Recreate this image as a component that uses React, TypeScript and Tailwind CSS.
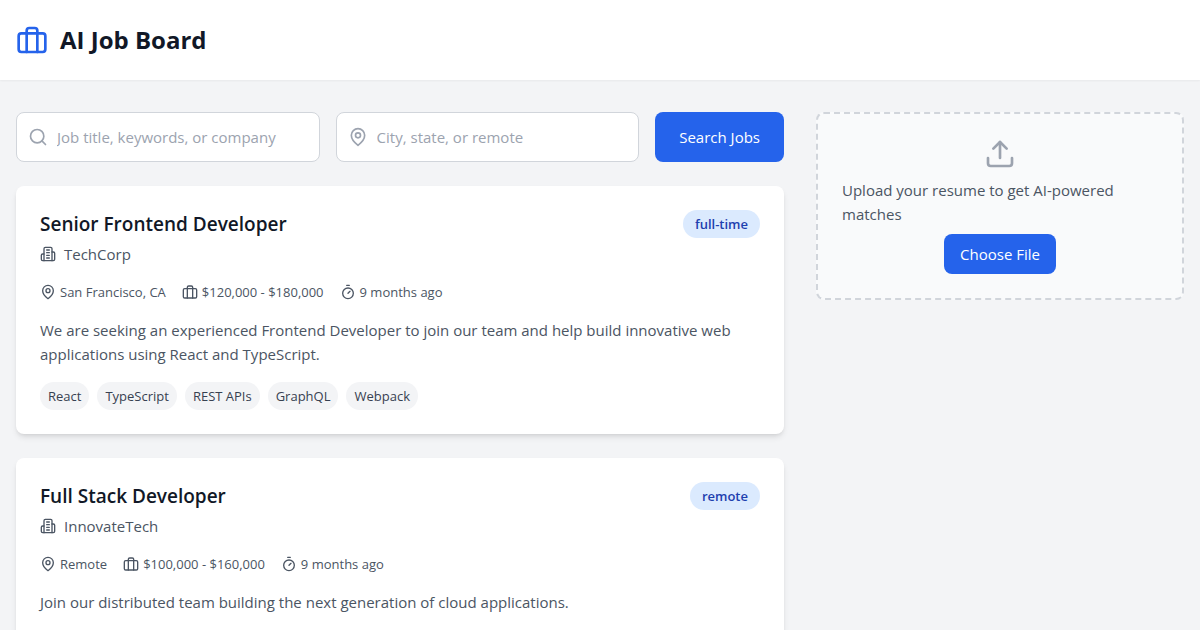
import type { FormEvent, ReactNode } from "react";
import { useRef, useState } from "react";

type IconProps = { className?: string };

function Icon({ className, children }: IconProps & { children: ReactNode }) {
  return (
    <svg
      viewBox="0 0 24 24"
      fill="none"
      stroke="currentColor"
      strokeWidth="2"
      strokeLinecap="round"
      strokeLinejoin="round"
      aria-hidden="true"
      className={className}
    >
      {children}
    </svg>
  );
}

const Briefcase = ({ className }: IconProps) => (
  <Icon className={className}>
    <rect width="20" height="14" x="2" y="7" rx="2" ry="2" />
    <path d="M16 21V5a2 2 0 0 0-2-2h-4a2 2 0 0 0-2 2v16" />
  </Icon>
);

const MapPin = ({ className }: IconProps) => (
  <Icon className={className}>
    <path d="M20 10c0 6-8 12-8 12s-8-6-8-12a8 8 0 0 1 16 0Z" />
    <circle cx="12" cy="10" r="3" />
  </Icon>
);

const Search = ({ className }: IconProps) => (
  <Icon className={className}>
    <circle cx="11" cy="11" r="8" />
    <path d="m21 21-4.3-4.3" />
  </Icon>
);

const Building = ({ className }: IconProps) => (
  <Icon className={className}>
    <path d="M6 22V4a2 2 0 0 1 2-2h8a2 2 0 0 1 2 2v18Z" />
    <path d="M6 12H4a2 2 0 0 0-2 2v6a2 2 0 0 0 2 2h2" />
    <path d="M18 9h2a2 2 0 0 1 2 2v9a2 2 0 0 1-2 2h-2" />
    <path d="M10 6h4" />
    <path d="M10 10h4" />
    <path d="M10 14h4" />
    <path d="M10 18h4" />
  </Icon>
);

const Timer = ({ className }: IconProps) => (
  <Icon className={className}>
    <line x1="10" x2="14" y1="2" y2="2" />
    <line x1="12" x2="15" y1="14" y2="11" />
    <circle cx="12" cy="14" r="8" />
  </Icon>
);

const Upload = ({ className }: IconProps) => (
  <Icon className={className}>
    <path d="M21 15v4a2 2 0 0 1-2 2H5a2 2 0 0 1-2-2v-4" />
    <polyline points="17 8 12 3 7 8" />
    <line x1="12" x2="12" y1="3" y2="15" />
  </Icon>
);

type Job = {
  title: string;
  company: string;
  type: string;
  location: string;
  salary: string;
  posted: string;
  description: string;
  skills: string[];
};

const jobs: Job[] = [
  {
    title: "Senior Frontend Developer",
    company: "TechCorp",
    type: "full-time",
    location: "San Francisco, CA",
    salary: "$120,000 - $180,000",
    posted: "9 months ago",
    description:
      "We are seeking an experienced Frontend Developer to join our team and help build innovative web applications using React and TypeScript.",
    skills: ["React", "TypeScript", "REST APIs", "GraphQL", "Webpack"],
  },
  {
    title: "Full Stack Developer",
    company: "InnovateTech",
    type: "remote",
    location: "Remote",
    salary: "$100,000 - $160,000",
    posted: "9 months ago",
    description: "Join our distributed team building the next generation of cloud applications.",
    skills: ["React", "Node.js", "AWS", "MongoDB", "Docker"],
  },
];

function JobCard({ job }: { job: Job }) {
  return (
    <article className="rounded-lg bg-white p-6 shadow-md">
      <div className="flex items-start justify-between">
        <div>
          <h2 className="text-[19px] leading-7 font-semibold text-[#111827]">{job.title}</h2>
          <div className="mt-1 flex items-center gap-2 text-[#4b5563]">
            <Building className="size-4" />
            <span>{job.company}</span>
          </div>
        </div>
        <span className="rounded-full bg-[#dbeafe] px-3 py-1 text-[13px] leading-5 font-semibold text-[#1e40af]">
          {job.type}
        </span>
      </div>
      <div className="mt-4 flex flex-wrap gap-4 text-[13px] leading-5 text-[#4b5563]">
        <div className="flex items-center gap-1">
          <MapPin className="size-4" />
          <span>{job.location}</span>
        </div>
        <div className="flex items-center gap-1">
          <Briefcase className="size-4" />
          <span>{job.salary}</span>
        </div>
        <div className="flex items-center gap-1">
          <Timer className="size-4" />
          <span>{job.posted}</span>
        </div>
      </div>
      <p className="mt-4 text-[#4b5563]">{job.description}</p>
      <ul className="mt-4 flex flex-wrap gap-2">
        {job.skills.map((skill) => (
          <li key={skill} className="rounded-full bg-[#f3f4f6] px-2 py-1 text-[13px] leading-5 text-[#374151]">
            {skill}
          </li>
        ))}
      </ul>
    </article>
  );
}

function SearchField({
  label,
  icon,
  value,
  onChange,
}: {
  label: string;
  icon: ReactNode;
  value: string;
  onChange: (value: string) => void;
}) {
  return (
    <label className="relative min-w-0 flex-1">
      <span className="pointer-events-none absolute inset-y-0 left-3 flex items-center text-[#9ca3af]">{icon}</span>
      <input
        type="text"
        aria-label={label}
        placeholder={label}
        value={value}
        onChange={(event) => onChange(event.target.value)}
        className="w-full rounded-lg border border-[#d1d5db] bg-white py-3 pr-4 pl-10 text-[#111827] placeholder:text-[#9ca3af] focus:border-[#2563eb] focus:outline-none"
      />
    </label>
  );
}

export default function App() {
  const [keywords, setKeywords] = useState("");
  const [place, setPlace] = useState("");
  const fileInput = useRef<HTMLInputElement>(null);

  return (
    <div className="min-h-screen bg-[#f3f4f6] font-['Segoe_UI','Open_Sans',sans-serif] text-[15px] leading-6">
      <header className="bg-white shadow-xs">
        <div className="mx-auto flex max-w-7xl items-center gap-3 px-4 py-6">
          <Briefcase className="size-8 text-[#2563eb]" />
          <h1 className="text-2xl font-bold text-[#111827]">AI Job Board</h1>
        </div>
      </header>
      <main className="mx-auto grid max-w-7xl grid-cols-3 gap-8 px-4 py-8">
        <div className="col-span-2 flex flex-col gap-6">
          <form className="flex gap-4" onSubmit={(event: FormEvent) => event.preventDefault()}>
            <SearchField
              label="Job title, keywords, or company"
              icon={<Search className="size-5" />}
              value={keywords}
              onChange={setKeywords}
            />
            <SearchField
              label="City, state, or remote"
              icon={<MapPin className="size-5" />}
              value={place}
              onChange={setPlace}
            />
            <button type="submit" className="rounded-lg bg-[#2563eb] px-6 py-3 text-white hover:bg-[#1d4ed8]">
              Search Jobs
            </button>
          </form>
          {jobs.map((job) => (
            <JobCard key={job.title} job={job} />
          ))}
        </div>
        <aside>
          <div className="flex flex-col items-center gap-2 rounded-lg border-2 border-dashed border-[#d1d5db] bg-[#f9fafb] p-6">
            <Upload className="size-8 text-[#9ca3af]" />
            <p className="w-full text-[#4b5563]">Upload your resume to get AI-powered matches</p>
            <input ref={fileInput} type="file" aria-label="Resume" className="hidden" />
            <button
              type="button"
              onClick={() => fileInput.current?.click()}
              className="rounded-lg bg-[#2563eb] px-4 py-2 text-white hover:bg-[#1d4ed8]"
            >
              Choose File
            </button>
          </div>
        </aside>
      </main>
    </div>
  );
}
